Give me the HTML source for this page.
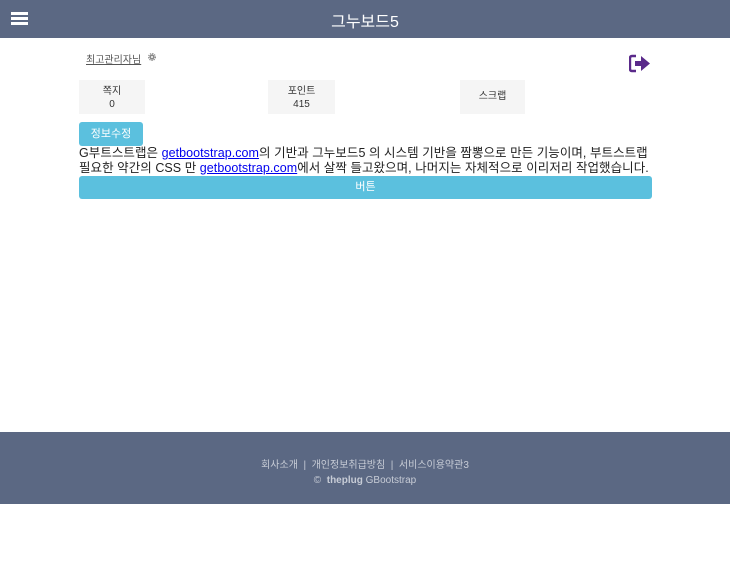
<!DOCTYPE html>
<html><head><meta charset="utf-8"><style>
body{margin:0;width:730px;height:588px;background:#fff;font-family:"Liberation Sans","Noto Sans CJK KR",sans-serif;position:relative;overflow:hidden}
.hdr{position:absolute;left:0;top:0;width:730px;height:38px;background:#5b6883}
.hdr .t{position:absolute;left:0;width:730px;top:8px;text-align:center;color:#fff;font-size:16px}
.ham{position:absolute;left:11px;top:12px;width:17px;height:3px;background:#fff;box-shadow:0 5px 0 #fff,0 10px 0 #fff}
.abs{position:absolute}
.box{position:absolute;top:80px;height:34px;background:#f5f5f5;font-size:10px;color:#333;text-align:center;line-height:13px}
.ft{position:absolute;left:0;top:432px;width:730px;height:72px;background:#5b6883;color:#c7ccd6;font-size:10px;text-align:center}
</style></head><body>
<div class="hdr"><div class="ham"></div><div class="t">그누보드5</div></div>
<div class="abs" style="left:86px;top:51px;font-size:10px;color:#555;text-decoration:underline">최고관리자님</div>
<svg class="abs" style="left:148px;top:53px" width="8" height="8" viewBox="0 0 8 8"><circle cx="4" cy="4" r="2.6" fill="#888"/><circle cx="4" cy="4" r="3.4" fill="none" stroke="#888" stroke-width="1.2" stroke-dasharray="1.3 1"/><circle cx="4" cy="4" r="1" fill="#fff"/></svg>
<svg class="abs" style="left:629px;top:54px" width="22" height="19" viewBox="0 0 22 19"><path d="M7 2H3Q1 2 1 4V15Q1 17 3 17H7" fill="none" stroke="#5a2a8a" stroke-width="2.4"/><path d="M6 7H12V2L21 9.5L12 17V12H6Z" fill="#5a2a8a"/></svg>
<div class="box" style="left:79px;width:66px;padding-top:5px;height:29px">쪽지<br>0</div>
<div class="box" style="left:268px;width:67px;padding-top:5px;height:29px">포인트<br>415</div>
<div class="box" style="left:460px;width:65px;line-height:34px">스크랩</div>
<div class="abs" style="left:79px;top:122px;width:64px;height:24px;background:#5bc0de;border-radius:3px;color:#fff;font-size:11px;line-height:24px;text-align:center">정보수정</div>
<div class="abs" style="left:79px;top:146px;white-space:nowrap;font-size:12.5px;line-height:14.5px;color:#222;letter-spacing:0.05px">G부트스트랩은 <u style="color:#00e">getbootstrap.com</u>의 기반과 그누보드5 의 시스템 기반을 짬뽕으로 만든 기능이며, 부트스트랩<br>필요한 약간의 CSS 만 <u style="color:#00e">getbootstrap.com</u>에서 살짝 들고왔으며, 나머지는 자체적으로 이리저리 작업했습니다.</div>
<div class="abs" style="left:79px;top:176px;width:573px;height:23px;background:#5bc0de;border-radius:3px;color:#fff;font-size:11px;line-height:23px;text-align:center">버튼</div>
<div class="ft"><div style="margin-top:24px">회사소개 &nbsp;|&nbsp; 개인정보취급방침 &nbsp;|&nbsp; 서비스이용약관3</div><div style="margin-top:4px">© &nbsp;<b>theplug</b> GBootstrap</div></div>
</body></html>
